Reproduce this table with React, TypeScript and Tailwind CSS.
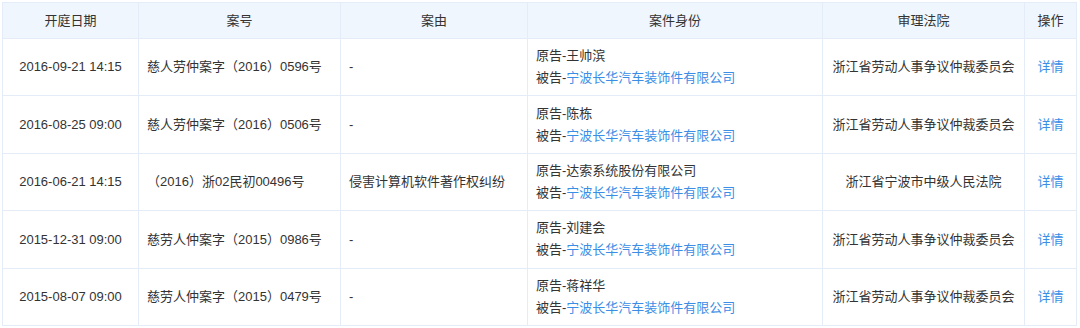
import React from "react";

type Row = {
  date: string;
  no: string;
  reason: string;
  plaintiff: string;
  court: string;
};

const rows: Row[] = [
  { date: "2016-09-21 14:15", no: "慈人劳仲案字（2016）0596号", reason: "-", plaintiff: "王帅滨", court: "浙江省劳动人事争议仲裁委员会" },
  { date: "2016-08-25 09:00", no: "慈人劳仲案字（2016）0506号", reason: "-", plaintiff: "陈栋", court: "浙江省劳动人事争议仲裁委员会" },
  { date: "2016-06-21 14:15", no: "（2016）浙02民初00496号", reason: "侵害计算机软件著作权纠纷", plaintiff: "达索系统股份有限公司", court: "浙江省宁波市中级人民法院" },
  { date: "2015-12-31 09:00", no: "慈劳人仲案字（2015）0986号", reason: "-", plaintiff: "刘建会", court: "浙江省劳动人事争议仲裁委员会" },
  { date: "2015-08-07 09:00", no: "慈劳人仲案字（2015）0479号", reason: "-", plaintiff: "蒋祥华", court: "浙江省劳动人事争议仲裁委员会" },
];

const cell = "border border-[#e4edf7] px-2 align-middle";

export default function App() {
  return (
    <div
      className="w-[1080px] h-[328px] bg-white pt-[2px] pl-[2px] text-[13px] text-[#333]"
      style={{ fontFamily: '"Liberation Sans", "Noto Sans CJK SC", sans-serif' }}
    >
      <table className="border-collapse w-[1074px] table-fixed">
        <colgroup>
          <col className="w-[136px]" />
          <col className="w-[202px]" />
          <col className="w-[187px]" />
          <col className="w-[295px]" />
          <col className="w-[202px]" />
          <col className="w-[52px]" />
        </colgroup>
        <thead>
          <tr className="h-[36px] bg-[#eff6fd]">
            <th className={`${cell} font-normal text-center`}>开庭日期</th>
            <th className={`${cell} font-normal text-center`}>案号</th>
            <th className={`${cell} font-normal text-center`}>案由</th>
            <th className={`${cell} font-normal text-center`}>案件身份</th>
            <th className={`${cell} font-normal text-center`}>审理法院</th>
            <th className={`${cell} font-normal text-center`}>操作</th>
          </tr>
        </thead>
        <tbody>
          {rows.map((r, i) => (
            <tr key={i} className="h-[57.4px]">
              <td className={`${cell} text-center`}>{r.date}</td>
              <td className={`${cell} text-left`}>{r.no}</td>
              <td className={`${cell} text-left`}>{r.reason}</td>
              <td className={`${cell} text-left leading-[22px]`}>
                <div>原告-{r.plaintiff}</div>
                <div>
                  被告-<span className="text-[#3a8ee6]">宁波长华汽车装饰件有限公司</span>
                </div>
              </td>
              <td className={`${cell} text-center`}>{r.court}</td>
              <td className={`${cell} text-center px-1`}>
                <span className="text-[#3a8ee6]">详情</span>
              </td>
            </tr>
          ))}
        </tbody>
      </table>
    </div>
  );
}
